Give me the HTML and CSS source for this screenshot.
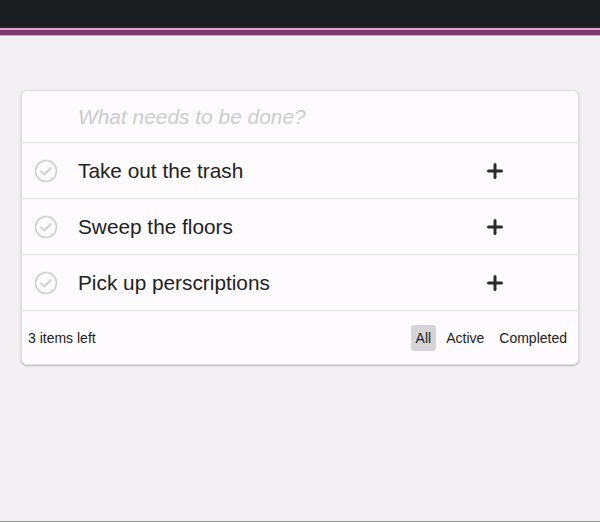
FILE: index.html
```html
<!DOCTYPE html>
<html>
<head>
<meta charset="utf-8">
<link rel="stylesheet" href="styles.css">
</head>
<body>
<header class="topbar"></header>
<div class="stripes">
  <div class="stripe-dark"></div>
  <div class="stripe-pink"></div>
  <div class="stripe-purple"></div>
  <div class="stripe-light"></div>
</div>
<main class="page">
  <section class="card">
    <div class="new-row">
      <input class="new-input" type="text" placeholder="What needs to be done?">
    </div>
    <ul class="list">
      <li class="item">
        <svg class="check" width="24" height="24" viewBox="0 0 24 24"><circle cx="12" cy="12" r="10.5" fill="none" stroke="#cfcdcf" stroke-width="1.6"/><path d="M7 12.3l3.3 3.3 6.4-6.6" fill="none" stroke="#cfcdcf" stroke-width="1.8" stroke-linecap="round" stroke-linejoin="round"/></svg>
        <span class="label">Take out the trash</span>
        <svg class="plus" width="16" height="16" viewBox="0 0 16 16"><path d="M8 1.5v13M1.5 8h13" stroke="#2a2a2a" stroke-width="3" stroke-linecap="round"/></svg>
      </li>
      <li class="item">
        <svg class="check" width="24" height="24" viewBox="0 0 24 24"><circle cx="12" cy="12" r="10.5" fill="none" stroke="#cfcdcf" stroke-width="1.6"/><path d="M7 12.3l3.3 3.3 6.4-6.6" fill="none" stroke="#cfcdcf" stroke-width="1.8" stroke-linecap="round" stroke-linejoin="round"/></svg>
        <span class="label">Sweep the floors</span>
        <svg class="plus" width="16" height="16" viewBox="0 0 16 16"><path d="M8 1.5v13M1.5 8h13" stroke="#2a2a2a" stroke-width="3" stroke-linecap="round"/></svg>
      </li>
      <li class="item">
        <svg class="check" width="24" height="24" viewBox="0 0 24 24"><circle cx="12" cy="12" r="10.5" fill="none" stroke="#cfcdcf" stroke-width="1.6"/><path d="M7 12.3l3.3 3.3 6.4-6.6" fill="none" stroke="#cfcdcf" stroke-width="1.8" stroke-linecap="round" stroke-linejoin="round"/></svg>
        <span class="label">Pick up perscriptions</span>
        <svg class="plus" width="16" height="16" viewBox="0 0 16 16"><path d="M8 1.5v13M1.5 8h13" stroke="#2a2a2a" stroke-width="3" stroke-linecap="round"/></svg>
      </li>
    </ul>
    <footer class="footer">
      <span class="count">3 items left</span>
      <nav class="filters">
        <span class="filter selected">All</span>
        <span class="filter">Active</span>
        <span class="filter">Completed</span>
      </nav>
    </footer>
  </section>
</main>
<div class="bottom-line"></div>
</body>
</html>
```

FILE: styles.css
```css
html, body {
  margin: 0;
  padding: 0;
}
body {
  background: #f3f0f3;
  font-family: "Liberation Sans", Arial, sans-serif;
  color: #222;
  height: 522px;
  display: flex;
  flex-direction: column;
  overflow: hidden;
}
.topbar {
  height: 27px;
  background: #1c1d21;
  flex: none;
}
.stripes { flex: none; }
.stripe-dark { height: 1px; background: #2c2a2e; }
.stripe-pink { height: 2px; background: #e79ad0; }
.stripe-purple { height: 5px; background: #7b3b6f; }
.stripe-light { height: 1px; background: #c9a8c2; }
.page {
  flex: 1;
  padding: 54px 21px 0;
}
.card {
  background: #fdfbfd;
  border: 1px solid #dedcde;
  border-radius: 6px;
  box-shadow: 0 1px 2px rgba(0,0,0,0.25);
  overflow: hidden;
}
.new-row {
  height: 51px;
  display: flex;
  align-items: center;
  border-bottom: 1px solid #e1dfe1;
}
.new-input {
  border: none;
  outline: none;
  background: transparent;
  margin-left: 56px;
  padding: 0;
  width: 480px;
  font-family: "Liberation Sans", Arial, sans-serif;
  font-size: 20.9px;
  color: #222;
}
.new-input::placeholder {
  color: #cdcbcd;
  font-style: italic;
}
.list {
  list-style: none;
  margin: 0;
  padding: 0;
}
.item {
  height: 55px;
  display: flex;
  align-items: center;
  border-bottom: 1px solid #e1dfe1;
}
.check {
  margin-left: 12px;
  flex: none;
}
.label {
  margin-left: 20px;
  font-size: 20.8px;
  color: #222;
  width: 409px;
}
.plus {
  flex: none;
}
.footer {
  height: 53px;
  display: flex;
  align-items: center;
  justify-content: space-between;
  padding: 0 6px 0 6px;
}
.count {
  font-size: 14px;
  color: #222;
}
.filters {
  display: flex;
  align-items: center;
  gap: 5px;
}
.filter {
  font-size: 14px;
  padding: 5px 5px;
  border-radius: 3px;
  color: #222;
}
.filter.selected {
  background: #d6d4d6;
}
.bottom-line {
  height: 1px;
  background: #8a8a8a;
  flex: none;
}
```
